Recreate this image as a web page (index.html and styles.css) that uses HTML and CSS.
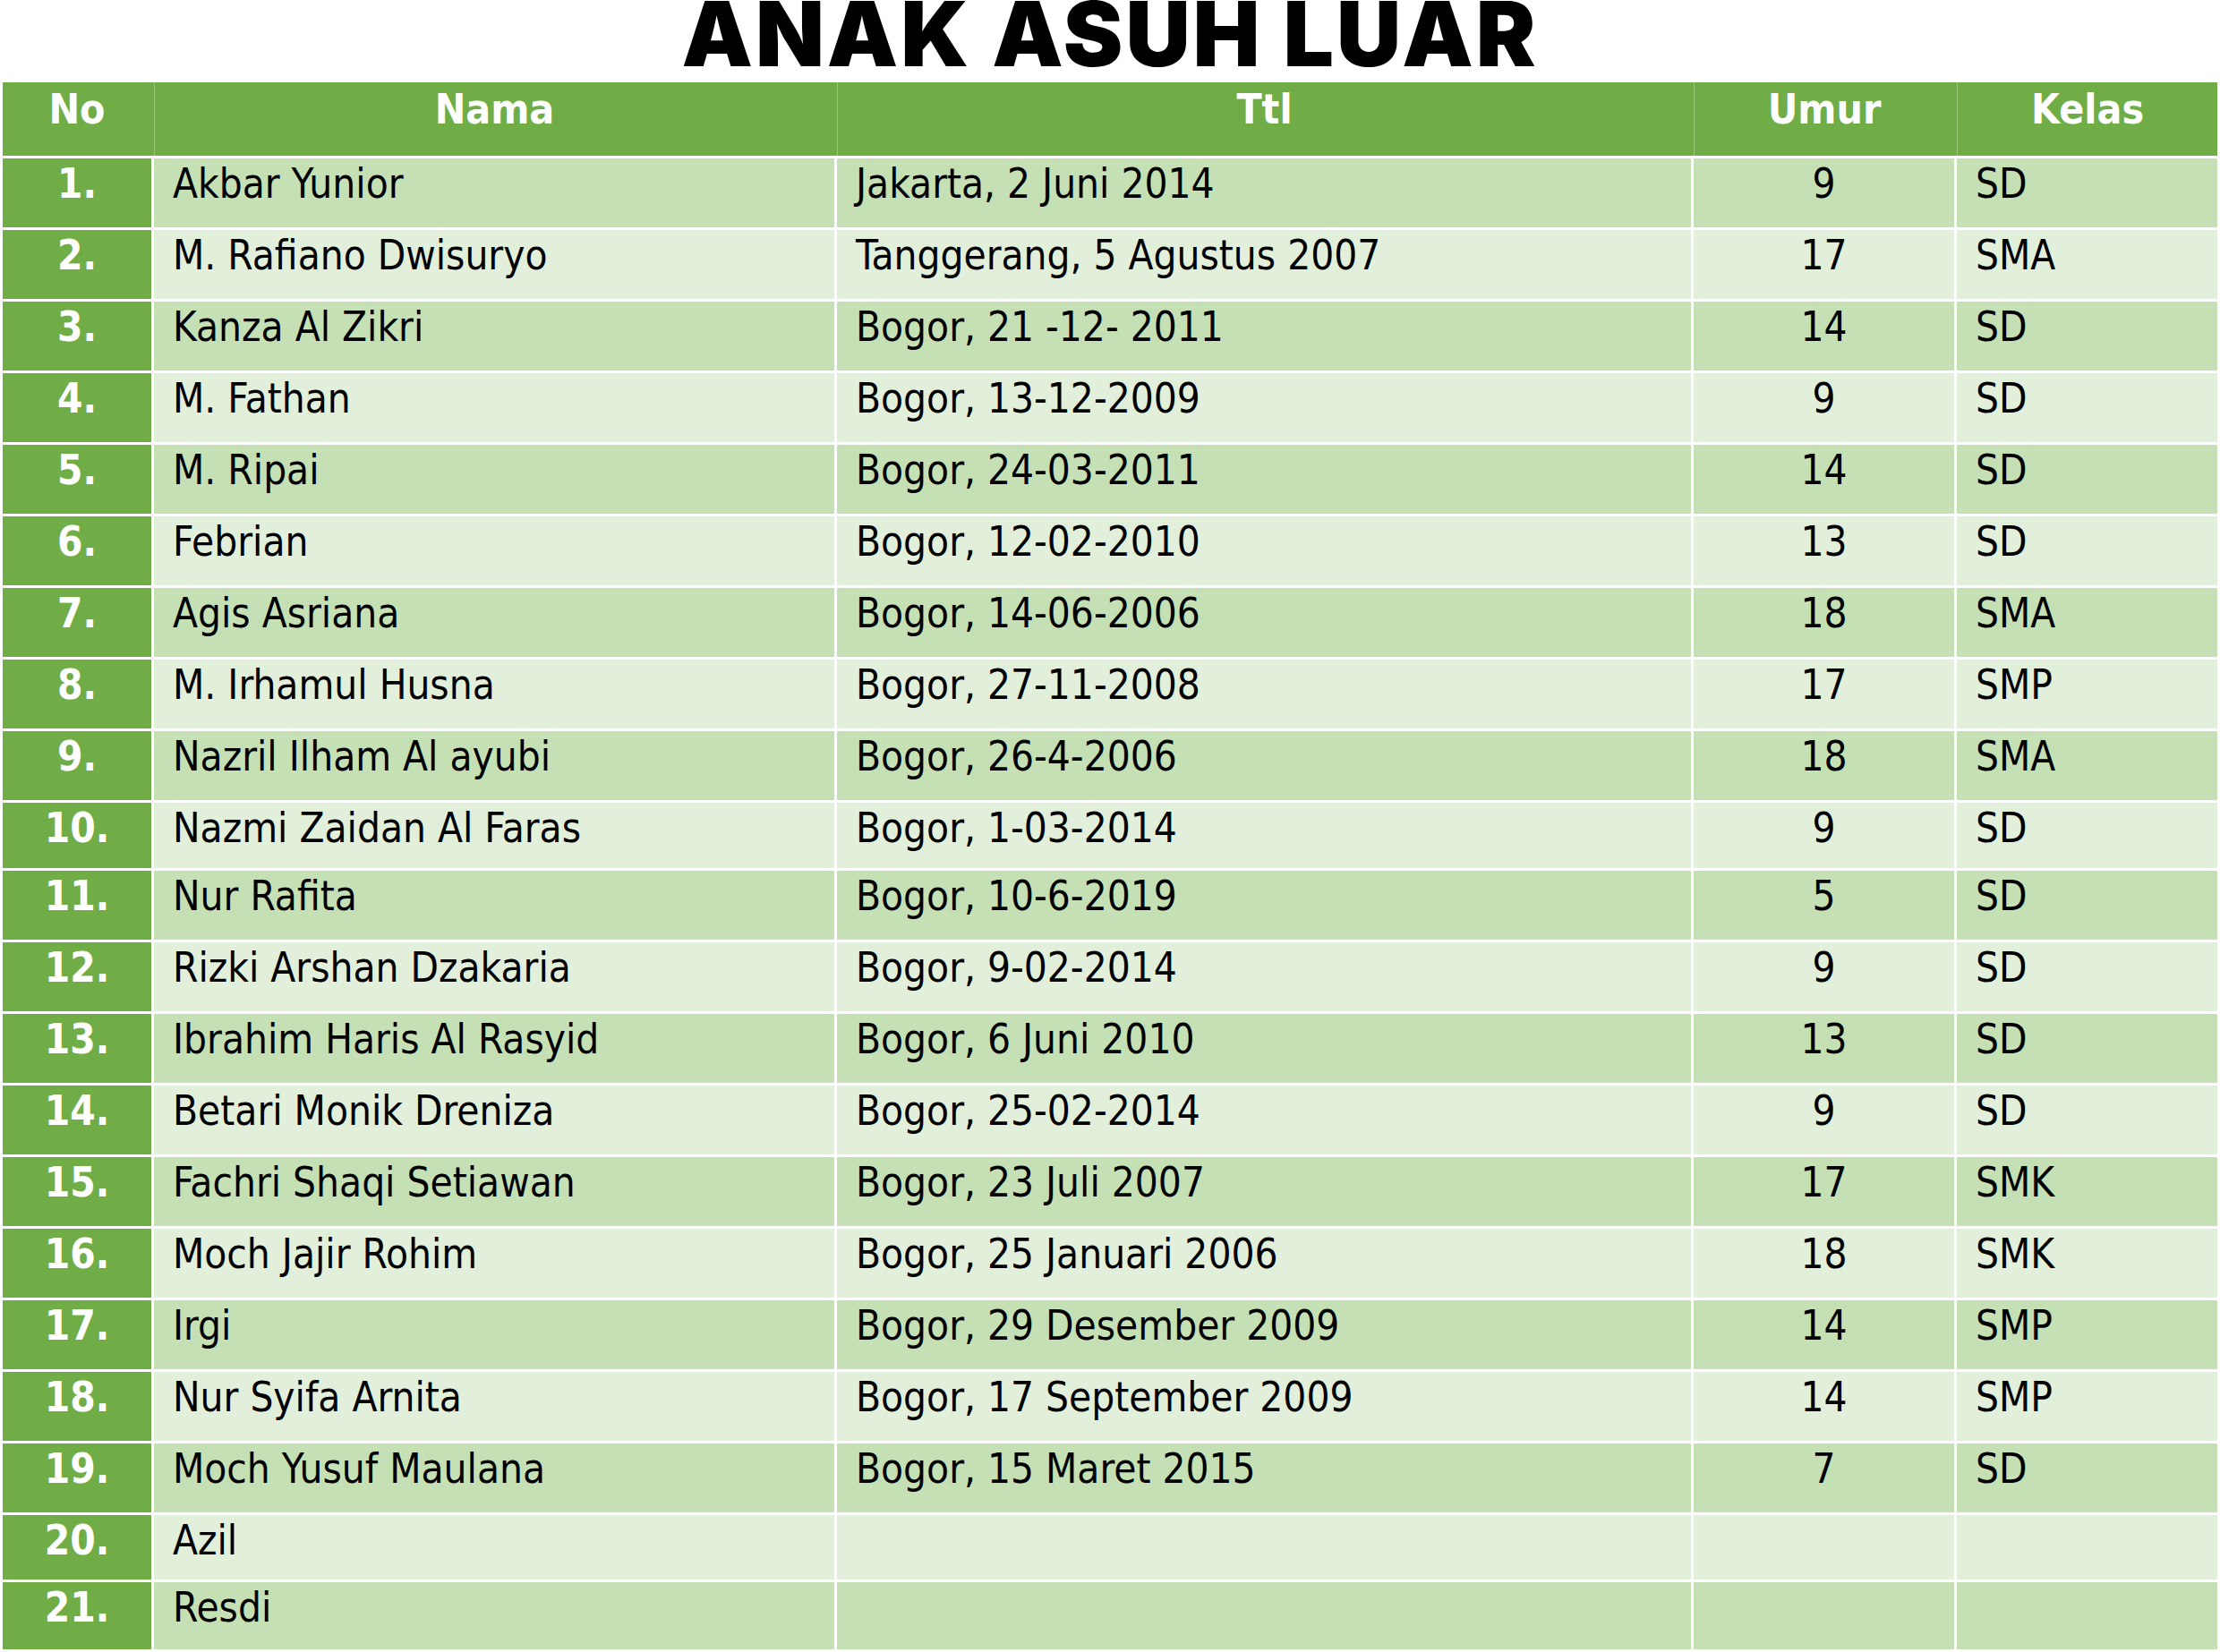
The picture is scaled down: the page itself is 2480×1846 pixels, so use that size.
FILE: index.html
```html
<!DOCTYPE html>
<html lang="id">
<head>
<meta charset="utf-8">
<title>Anak Asuh Luar</title>
<link rel="stylesheet" href="styles.css">
</head>
<body>
<div class="page">
  <h1 class="title">ANAK ASUH LUAR</h1>
  <div class="table">
    <div class="row head">
      <div class="cell">No</div>
      <div class="cell">Nama</div>
      <div class="cell">Ttl</div>
      <div class="cell">Umur</div>
      <div class="cell">Kelas</div>
    </div>
    <div class="row odd"><div class="cell no">1.</div><div class="cell">Akbar Yunior</div><div class="cell">Jakarta, 2 Juni 2014</div><div class="cell num">9</div><div class="cell">SD</div></div>
    <div class="row even"><div class="cell no">2.</div><div class="cell">M. Rafiano Dwisuryo</div><div class="cell">Tanggerang, 5 Agustus 2007</div><div class="cell num">17</div><div class="cell">SMA</div></div>
    <div class="row odd"><div class="cell no">3.</div><div class="cell">Kanza Al Zikri</div><div class="cell">Bogor, 21 -12- 2011</div><div class="cell num">14</div><div class="cell">SD</div></div>
    <div class="row even"><div class="cell no">4.</div><div class="cell">M. Fathan</div><div class="cell">Bogor, 13-12-2009</div><div class="cell num">9</div><div class="cell">SD</div></div>
    <div class="row odd"><div class="cell no">5.</div><div class="cell">M. Ripai</div><div class="cell">Bogor, 24-03-2011</div><div class="cell num">14</div><div class="cell">SD</div></div>
    <div class="row even"><div class="cell no">6.</div><div class="cell">Febrian</div><div class="cell">Bogor, 12-02-2010</div><div class="cell num">13</div><div class="cell">SD</div></div>
    <div class="row odd"><div class="cell no">7.</div><div class="cell">Agis Asriana</div><div class="cell">Bogor, 14-06-2006</div><div class="cell num">18</div><div class="cell">SMA</div></div>
    <div class="row even"><div class="cell no">8.</div><div class="cell">M. Irhamul Husna</div><div class="cell">Bogor, 27-11-2008</div><div class="cell num">17</div><div class="cell">SMP</div></div>
    <div class="row odd"><div class="cell no">9.</div><div class="cell">Nazril Ilham Al ayubi</div><div class="cell">Bogor, 26-4-2006</div><div class="cell num">18</div><div class="cell">SMA</div></div>
    <div class="row even short"><div class="cell no">10.</div><div class="cell">Nazmi Zaidan Al Faras</div><div class="cell">Bogor, 1-03-2014</div><div class="cell num">9</div><div class="cell">SD</div></div>
    <div class="row odd"><div class="cell no">11.</div><div class="cell">Nur Rafita</div><div class="cell">Bogor, 10-6-2019</div><div class="cell num">5</div><div class="cell">SD</div></div>
    <div class="row even"><div class="cell no">12.</div><div class="cell">Rizki Arshan Dzakaria</div><div class="cell">Bogor, 9-02-2014</div><div class="cell num">9</div><div class="cell">SD</div></div>
    <div class="row odd"><div class="cell no">13.</div><div class="cell">Ibrahim Haris Al Rasyid</div><div class="cell">Bogor, 6 Juni 2010</div><div class="cell num">13</div><div class="cell">SD</div></div>
    <div class="row even"><div class="cell no">14.</div><div class="cell">Betari Monik Dreniza</div><div class="cell">Bogor, 25-02-2014</div><div class="cell num">9</div><div class="cell">SD</div></div>
    <div class="row odd"><div class="cell no">15.</div><div class="cell">Fachri Shaqi Setiawan</div><div class="cell">Bogor, 23 Juli 2007</div><div class="cell num">17</div><div class="cell">SMK</div></div>
    <div class="row even"><div class="cell no">16.</div><div class="cell">Moch Jajir Rohim</div><div class="cell">Bogor, 25 Januari 2006</div><div class="cell num">18</div><div class="cell">SMK</div></div>
    <div class="row odd"><div class="cell no">17.</div><div class="cell">Irgi</div><div class="cell">Bogor, 29 Desember 2009</div><div class="cell num">14</div><div class="cell">SMP</div></div>
    <div class="row even"><div class="cell no">18.</div><div class="cell">Nur Syifa Arnita</div><div class="cell">Bogor, 17 September 2009</div><div class="cell num">14</div><div class="cell">SMP</div></div>
    <div class="row odd"><div class="cell no">19.</div><div class="cell">Moch Yusuf Maulana</div><div class="cell">Bogor, 15 Maret 2015</div><div class="cell num">7</div><div class="cell">SD</div></div>
    <div class="row even shorter"><div class="cell no">20.</div><div class="cell">Azil</div><div class="cell"></div><div class="cell num"></div><div class="cell"></div></div>
    <div class="row odd last"><div class="cell no">21.</div><div class="cell">Resdi</div><div class="cell"></div><div class="cell num"></div><div class="cell"></div></div>
  </div>
</div>
</body>
</html>
```

FILE: styles.css
```css
html, body {
  margin: 0;
  padding: 0;
  background: #ffffff;
}

.page {
  width: 2480px;
  height: 1846px;
  padding: 0 3px;
  box-sizing: border-box;
  overflow: hidden;
}

.title {
  margin: 0;
  height: 92px;
  font-family: "Inter", "Liberation Sans", sans-serif;
  font-weight: 900;
  font-size: 100px;
  line-height: 76px;
  letter-spacing: 3px;
  text-align: center;
  color: #000000;
}

.table {
  display: flex;
  flex-direction: column;
  gap: 3px;
}

.row {
  display: grid;
  grid-template-columns: 166px 760px 954px 291px 291px;
  column-gap: 3px;
  height: 77px;
  font-family: "DejaVu Sans Condensed", "DejaVu Sans", sans-serif;
  font-size: 45.5px;
  line-height: 1.2;
  color: #000000;
}

.row.head {
  height: 82px;
  background: #70ad47;
  color: #ffffff;
  font-weight: bold;
  font-size: 46px;
}

.row.head .cell {
  text-align: center;
  padding: 3px 0 0 0;
  border-left: 1px solid #98c878;
}

.row.head .cell:first-child {
  border-left: none;
}

.row.short { height: 73px; }
.row.shorter { height: 72px; }
.row.last { height: 75px; }

.cell {
  padding: 2px 0 0 21px;
  white-space: nowrap;
  overflow: hidden;
}

.odd .cell { background: #c5e0b4; }
.even .cell { background: #e2efda; }

.cell.num {
  text-align: center;
  padding-left: 0;
}

.row .cell.no {
  background: #70ad47;
  color: #ffffff;
  font-weight: bold;
  text-align: center;
  padding-left: 0;
}
```
